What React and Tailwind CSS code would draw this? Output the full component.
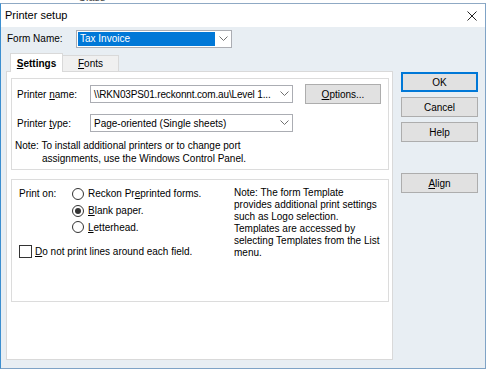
import React from "react";

const font = { fontFamily: "'Liberation Sans', Arial, sans-serif" };

function Chevron() {
  return (
    <svg width="9" height="6" viewBox="0 0 9 6" className="text-[#707070]">
      <path d="M0.5 0.5 L4.5 4.5 L8.5 0.5" fill="none" stroke="currentColor" strokeWidth="1" />
    </svg>
  );
}

function Combo({ width, children, highlight }) {
  return (
    <div
      className="flex h-[18px] items-center border border-[#abadb3] bg-white"
      style={{ width }}
    >
      <div className="flex-1 overflow-hidden whitespace-nowrap pl-[1px]">
        {highlight ? (
          <span className="block h-[14px] bg-[#0078d7] pl-[2px] leading-[14px] text-white">{children}</span>
        ) : (
          <span className="pl-[2px]">{children}</span>
        )}
      </div>
      <div className="flex w-[16px] shrink-0 items-center justify-center">
        <Chevron />
      </div>
    </div>
  );
}

function Radio({ checked, children, h }) {
  return (
    <div className={"flex items-center gap-[4px] " + h}>
      <span className="flex h-[12px] w-[12px] items-center justify-center rounded-full border border-[#333] bg-white">
        {checked && <span className="h-[6px] w-[6px] rounded-full bg-[#333]" />}
      </span>
      <span>{children}</span>
    </div>
  );
}

function Btn({ children, primary }) {
  return (
    <div
      className={
        "flex h-[20px] w-[77px] items-center justify-center bg-[#e1e1e1] " +
        (primary ? "border-2 border-[#0078d7]" : "border border-[#adadad]")
      }
    >
      {children}
    </div>
  );
}

export default function App() {
  return (
    <div className="relative h-[372px] w-[490px] overflow-hidden bg-white text-[10px] text-black" style={font}>
      <div className="h-[3px] overflow-hidden pl-[78px] text-[11px] leading-[3px] text-[#444]">
        <span className="relative top-[-4px]">Class</span>
      </div>
      <div className="w-[486px] border border-t-[#8fa9c4] border-l-[#3c8fd0] border-r-[#7fa3c6] border-b-[#7fa3c6]">
        <div className="flex h-[23px] items-center justify-between bg-white pl-[4px] pr-[8px]">
          <span className="text-[11px]">Printer setup</span>
          <svg width="10" height="10" viewBox="0 0 10 10">
            <path d="M0.5 0.5 L9.5 9.5 M9.5 0.5 L0.5 9.5" stroke="#222" strokeWidth="1" />
          </svg>
        </div>
        <div className="flex h-[341px] bg-[#e8eef3] pl-[5px] pt-[3px]">
          <div className="flex w-[387px] flex-col">
            <div className="flex h-[17px] items-center">
              <span className="w-[70px] pl-[1px]">Form Name:</span>
              <Combo width={156} highlight>
                <span className="inline-block w-[134px]">Tax Invoice</span>
              </Combo>
            </div>
            <div className="mt-[5px] flex h-[19px] items-end pl-[4px]">
              <div className="relative z-10 -mb-px flex h-[19px] w-[53px] items-center justify-center border border-b-0 border-[#d9d9d9] bg-white font-bold">
                <span><u>S</u>ettings</span>
              </div>
              <div className="flex h-[16px] w-[56px] items-center justify-center border border-b-0 border-l-0 border-[#d9d9d9] bg-[#f0f0f0]">
                <span><u>F</u>onts</span>
              </div>
            </div>
            <div className="h-[289px] border border-[#d9d9d9] bg-white pl-[4px] pt-[6px]">
              <div className="h-[92px] w-[378px] border border-[#dcdcdc] pl-[5px] pt-[6px]">
                <div className="flex h-[18px] items-center">
                  <span className="w-[73px] whitespace-nowrap">Printer <u>n</u>ame:</span>
                  <Combo width={203}>
                    <span className="tracking-[-0.15px]">\\RKN03PS01.reckonnt.com.au\Level 1...</span>
                  </Combo>
                  <div className="ml-[12px] flex h-[20px] w-[76px] items-center justify-center border border-[#adadad] bg-[#e1e1e1]">
                    <span><u>O</u>ptions...</span>
                  </div>
                </div>
                <div className="mt-[11px] flex h-[18px] items-center">
                  <span className="w-[73px] whitespace-nowrap">Printer <u>t</u>ype:</span>
                  <Combo width={203}>Page-oriented (Single sheets)</Combo>
                </div>
                <div className="mt-[7px] leading-[13px]">
                  <div className="-ml-[2px] whitespace-nowrap">Note: To install additional printers or to change port</div>
                  <div className="whitespace-nowrap pl-[25px]">assignments, use the Windows Control Panel.</div>
                </div>
              </div>
              <div className="mt-[9px] h-[123px] w-[378px] border border-[#dcdcdc] pl-[7px] pt-[5px]">
                <div className="flex">
                  <div className="w-[215px]">
                    <div className="flex">
                      <span className="w-[53px] leading-[17px]">Print on:</span>
                      <div className="flex flex-col">
                        <Radio h="h-[17px]">Reckon Pr<u>e</u>printed forms.</Radio>
                        <Radio h="h-[17px]" checked><u>B</u>lank paper.</Radio>
                        <Radio h="h-[16px]"><u>L</u>etterhead.</Radio>
                      </div>
                    </div>
                    <div className="mt-[8px] flex h-[16px] items-center gap-[3px]">
                      <span className="h-[13px] w-[13px] border border-[#333] bg-white" />
                      <span><u>D</u>o not print lines around each field.</span>
                    </div>
                  </div>
                  <div className="pt-[2px] leading-[12px] whitespace-nowrap">
                    <div>Note: The form Template</div>
                    <div>provides additional print settings</div>
                    <div>such as Logo selection.</div>
                    <div>Templates are accessed by</div>
                    <div>selecting Templates from the List</div>
                    <div>menu.</div>
                  </div>
                </div>
              </div>
            </div>
          </div>
          <div className="ml-[8px] flex flex-col gap-[5px] pt-[42px]">
            <Btn primary>OK</Btn>
            <Btn>Cancel</Btn>
            <Btn>Help</Btn>
            <div className="mt-[26px]">
              <Btn><span><u>A</u>lign</span></Btn>
            </div>
          </div>
        </div>
      </div>
    </div>
  );
}
